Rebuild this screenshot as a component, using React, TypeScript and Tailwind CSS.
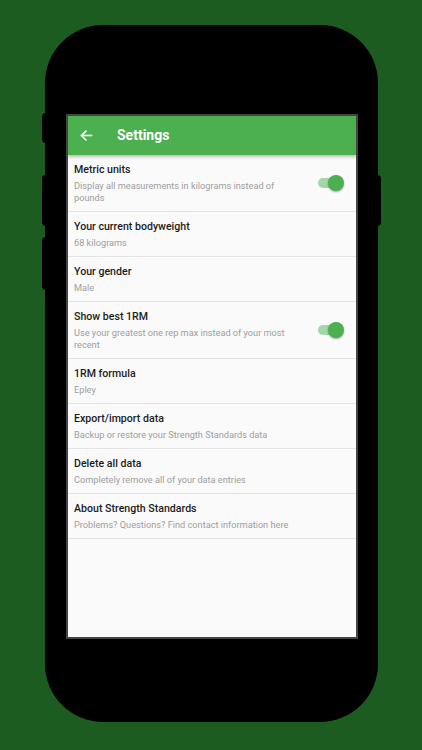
import React from "react";

type Row = { title: string; sub: string; toggle?: boolean };

const rows: Row[] = [
  { title: "Metric units", sub: "Display all measurements in kilograms instead of pounds", toggle: true },
  { title: "Your current bodyweight", sub: "68 kilograms" },
  { title: "Your gender", sub: "Male" },
  { title: "Show best 1RM", sub: "Use your greatest one rep max instead of your most recent", toggle: true },
  { title: "1RM formula", sub: "Epley" },
  { title: "Export/import data", sub: "Backup or restore your Strength Standards data" },
  { title: "Delete all data", sub: "Completely remove all of your data entries" },
  { title: "About Strength Standards", sub: "Problems? Questions? Find contact information here" },
];

function Toggle() {
  return (
    <div className="relative w-[26px] h-[16px] flex items-center shrink-0">
      <div className="w-[24px] h-[10px] rounded-full bg-[#a5d6a7]" />
      <div className="absolute right-0 top-0 w-[16px] h-[16px] rounded-full bg-[#4caf50] shadow-[0_1px_2px_rgba(0,0,0,0.35)]" />
    </div>
  );
}

export default function App() {
  return (
    <div
      className="w-[422px] h-[750px] bg-[#1d5c21] pt-[25px] pl-[45px]"
      style={{ fontFamily: "Roboto, 'Noto Sans', sans-serif" }}
    >
      <div className="relative w-[333px] h-[697px] rounded-[58px] bg-black pt-[89px] pl-[21px]">
        <div className="absolute left-[-3px] top-[88px] w-[4px] h-[30px] bg-black rounded-l-sm" />
        <div className="absolute left-[-3px] top-[150px] w-[4px] h-[51px] bg-black rounded-l-sm" />
        <div className="absolute left-[-3px] top-[212px] w-[4px] h-[53px] bg-black rounded-l-sm" />
        <div className="absolute right-[-3px] top-[150px] w-[4px] h-[51px] bg-black rounded-r-sm" />
        <div className="w-[292px] h-[525px] border-2 border-[#444] bg-[#fafafa] flex flex-col overflow-hidden">
          <div className="relative z-10 h-[39px] bg-[#4caf50] flex items-center shadow-[0_2px_3px_rgba(0,0,0,0.25)] shrink-0">
            <div className="w-[49px] pl-[11px] flex items-center">
              <svg width="15" height="15" viewBox="0 0 24 24" fill="none" stroke="white" strokeWidth="2.6" strokeLinecap="square">
                <path d="M20 12H5" />
                <path d="M11 5l-7 7 7 7" />
              </svg>
            </div>
            <span className="text-white text-[14px] font-bold">Settings</span>
          </div>
          <div className="flex flex-col">
            {rows.map((r) => (
              <div key={r.title} className="flex items-center border-b border-[#e3e3e3] pl-[6px] pr-[12px] pt-[7px] pb-[7px]">
                <div className="flex-1 min-w-0 pr-[24px]">
                  <div className="text-[10.6px] leading-[16px] font-medium text-[#1c1c1c]">{r.title}</div>
                  <div className="mt-[2px] text-[9.2px] leading-[12px] text-[#9e9e9e]">{r.sub}</div>
                </div>
                {r.toggle && <Toggle />}
              </div>
            ))}
          </div>
        </div>
      </div>
    </div>
  );
}
